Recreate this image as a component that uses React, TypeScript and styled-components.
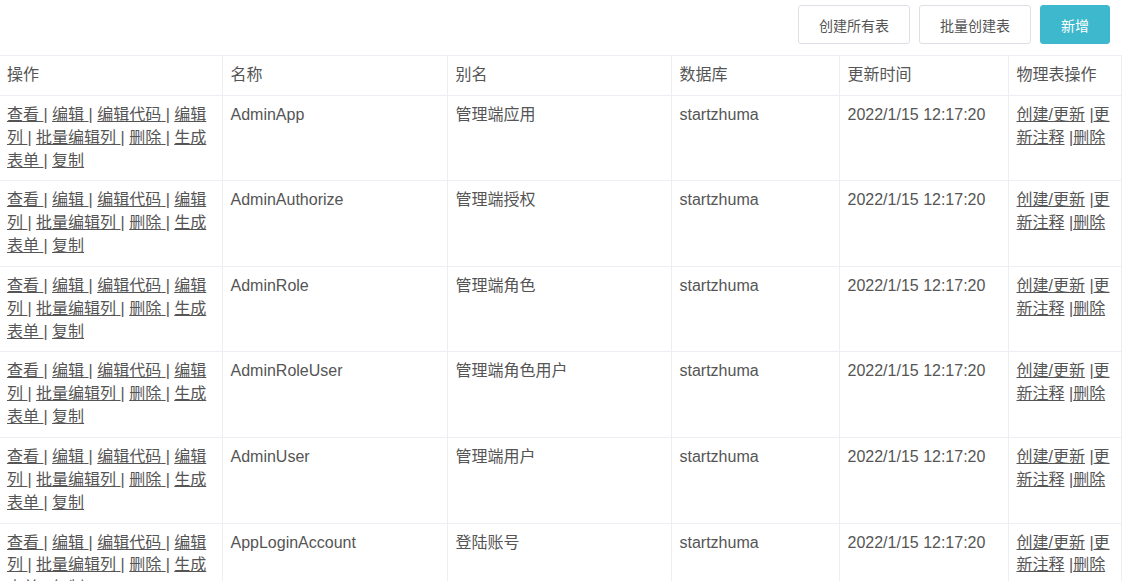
import React from "react";
import styled, { createGlobalStyle } from "styled-components";

const GlobalStyle = createGlobalStyle`
  body {
    margin: 0;
    background: #fff;
    font-family: "Liberation Sans", "Noto Sans CJK SC", Arial, sans-serif;
    color: #555;
  }
`;

const Page = styled.div`
  width: 1122px;
  overflow: hidden;
`;

const Toolbar = styled.div`
  display: flex;
  justify-content: flex-end;
  gap: 9px;
  padding: 5px 12px 11px 0;
`;

const Button = styled.button<{ $primary?: boolean }>`
  height: 39px;
  padding: 0 20px;
  font-family: inherit;
  font-size: 14px;
  border-radius: 3px;
  cursor: pointer;
  border: 1px solid ${(p) => (p.$primary ? "#3db8cc" : "#dcdfe6")};
  background: ${(p) => (p.$primary ? "#3db8cc" : "#fff")};
  color: ${(p) => (p.$primary ? "#fff" : "#555")};
`;

const Table = styled.table`
  width: 1121px;
  border-collapse: collapse;
  table-layout: fixed;
  font-size: 16px;
  line-height: 1.42857;
`;

const Th = styled.th`
  text-align: left;
  font-weight: normal;
  padding: 8px;
  border: 1px solid #ebeef3;
  &:first-child {
    border-left: none;
    padding-left: 7px;
  }
`;

const Td = styled.td`
  vertical-align: top;
  padding: 8px;
  border: 1px solid #ebeef3;
  &:first-child {
    border-left: none;
    padding-left: 7px;
  }
`;

const Link = styled.a`
  color: #555;
  text-decoration: underline;
  cursor: pointer;
`;

const widths = [222, 225, 224, 168, 169, 113];

const rows = [
  { name: "AdminApp", alias: "管理端应用" },
  { name: "AdminAuthorize", alias: "管理端授权" },
  { name: "AdminRole", alias: "管理端角色" },
  { name: "AdminRoleUser", alias: "管理端角色用户" },
  { name: "AdminUser", alias: "管理端用户" },
  { name: "AppLoginAccount", alias: "登陆账号" },
];

const ops = ["查看", "编辑", "编辑代码", "编辑列", "批量编辑列", "删除", "生成表单"];

const Ops = () => (
  <>
    {ops.map((op) => (
      <React.Fragment key={op}>
        <Link>{op} </Link>|{" "}
      </React.Fragment>
    ))}
    <Link>复制</Link>
  </>
);

const PhysicalOps = () => (
  <>
    <Link>创建/更新</Link> |<Link>更新注释</Link> |<Link>删除</Link>
  </>
);

export default function App() {
  return (
    <Page>
      <GlobalStyle />
      <Toolbar>
        <Button>创建所有表</Button>
        <Button>批量创建表</Button>
        <Button $primary>新增</Button>
      </Toolbar>
      <Table>
        <colgroup>
          {widths.map((w, i) => (
            <col key={i} style={{ width: w }} />
          ))}
        </colgroup>
        <thead>
          <tr>
            <Th>操作</Th>
            <Th>名称</Th>
            <Th>别名</Th>
            <Th>数据库</Th>
            <Th>更新时间</Th>
            <Th>物理表操作</Th>
          </tr>
        </thead>
        <tbody>
          {rows.map((r) => (
            <tr key={r.name}>
              <Td>
                <Ops />
              </Td>
              <Td>{r.name}</Td>
              <Td>{r.alias}</Td>
              <Td>startzhuma</Td>
              <Td>2022/1/15 12:17:20</Td>
              <Td>
                <PhysicalOps />
              </Td>
            </tr>
          ))}
        </tbody>
      </Table>
    </Page>
  );
}
